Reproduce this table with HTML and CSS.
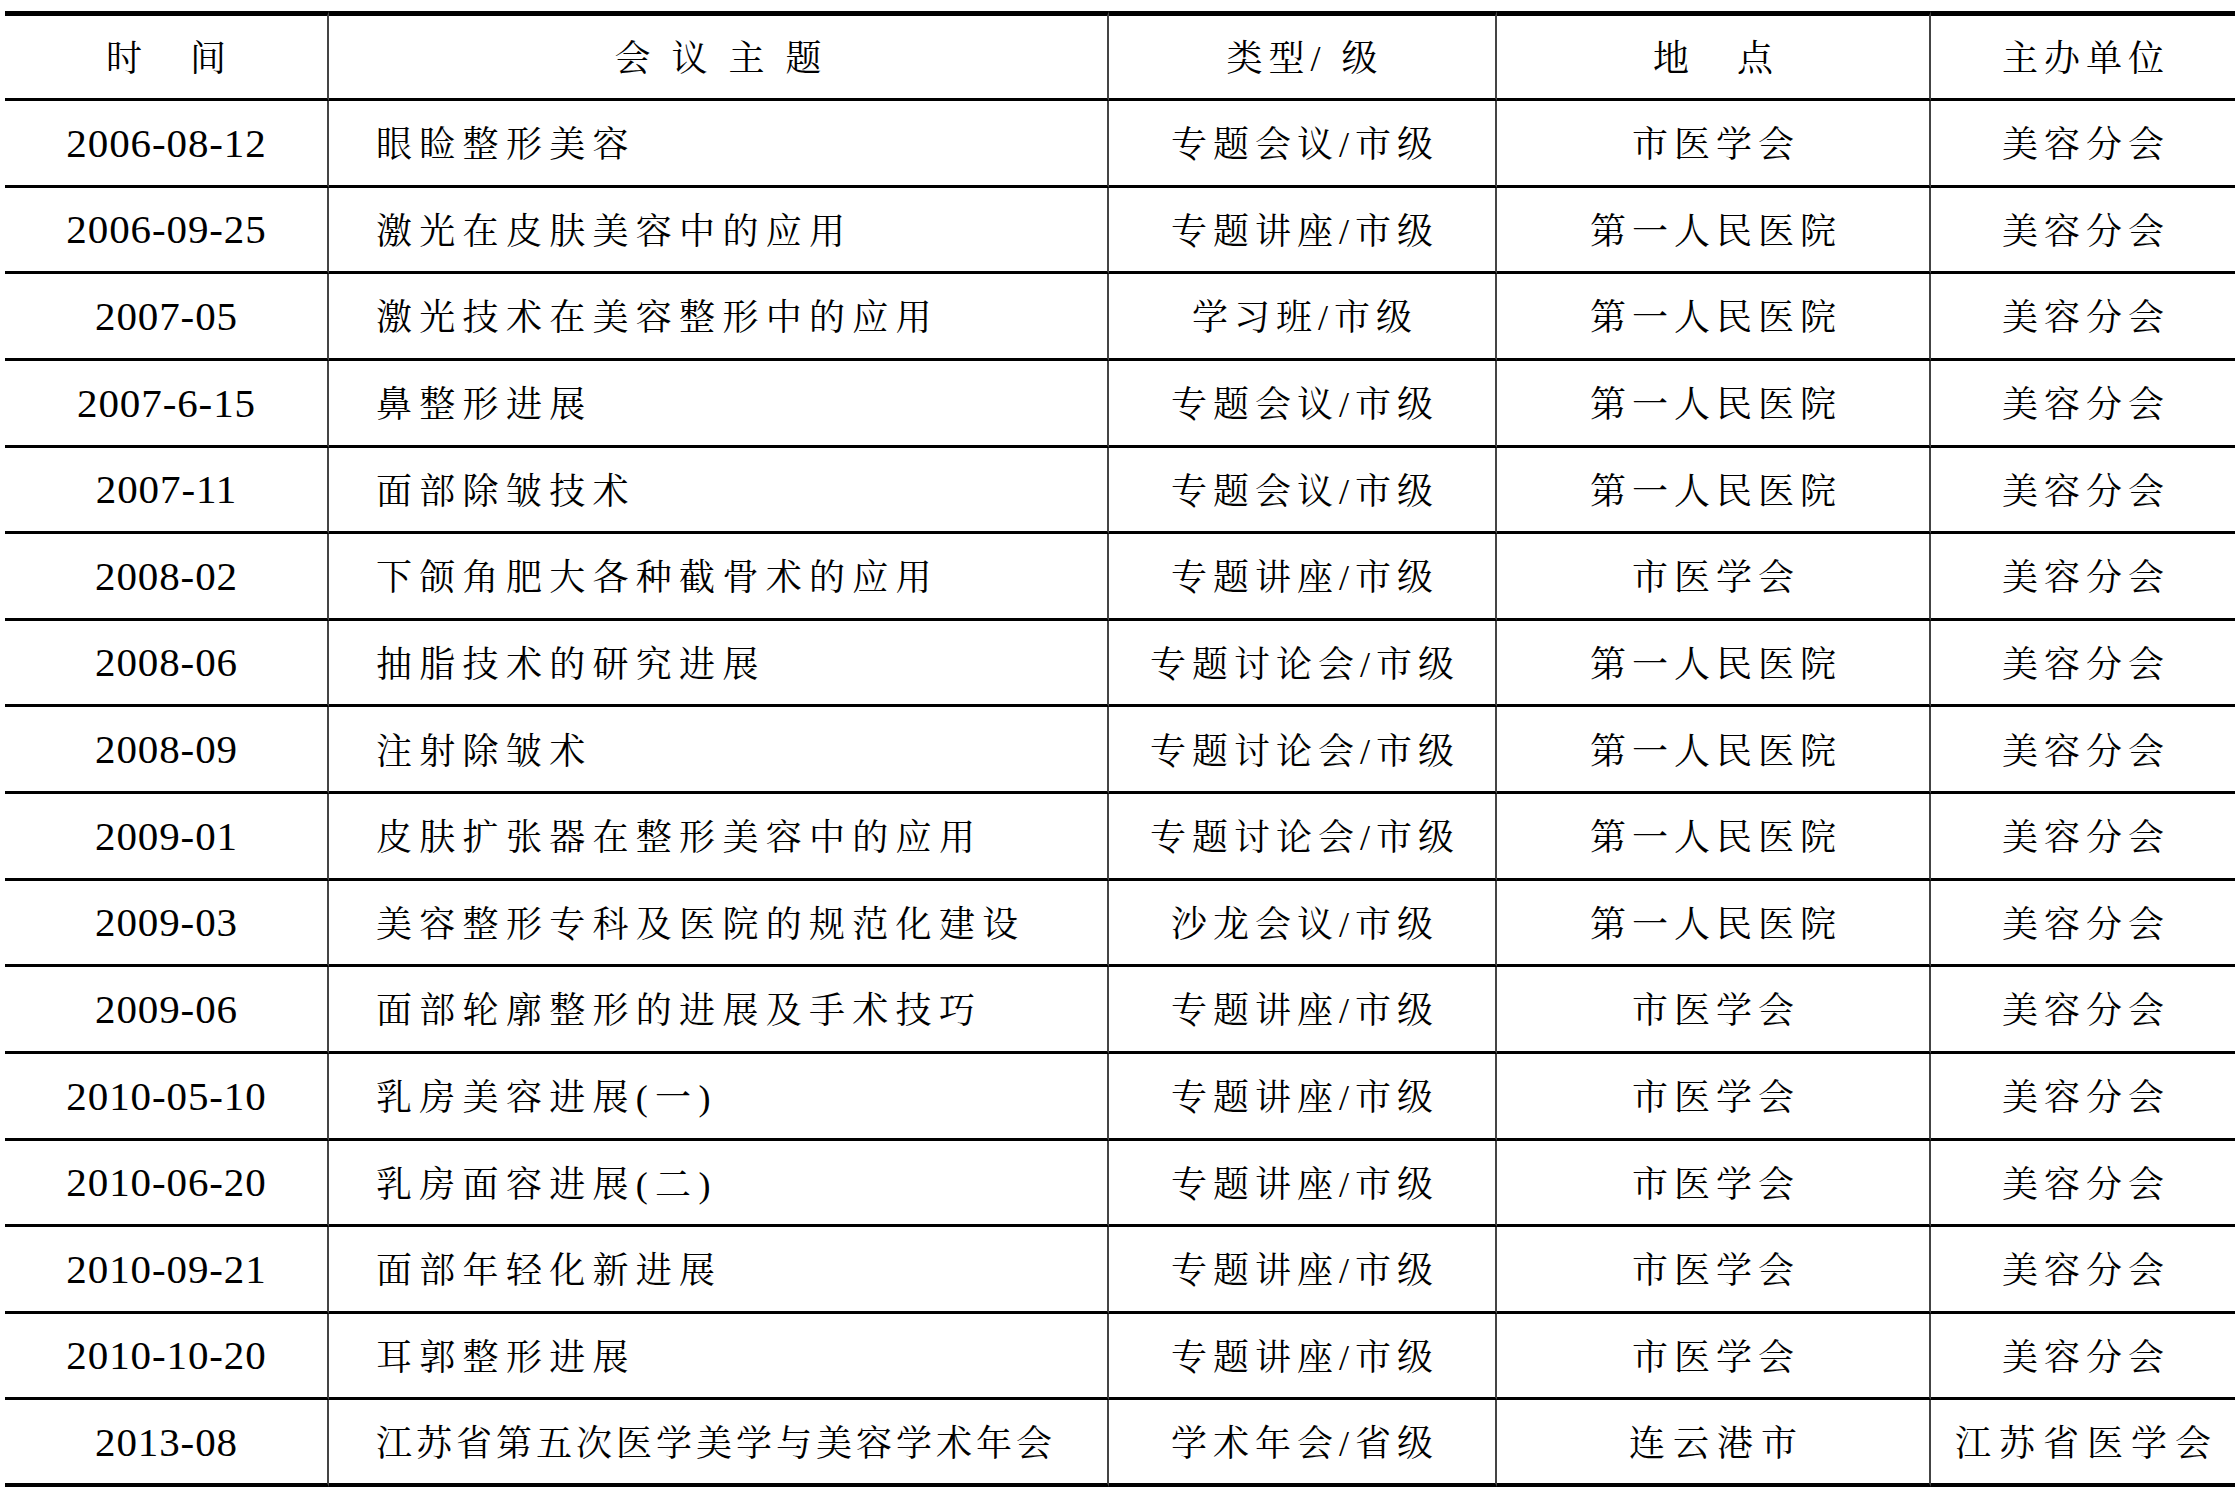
FILE: index.html
```html
<!DOCTYPE html>
<html lang="zh-CN">
<head>
<meta charset="utf-8">
<title>会议列表</title>
<link rel="stylesheet" href="styles.css">
</head>
<body>
<table class="tbl">
  <colgroup>
    <col class="c1"><col class="c2"><col class="c3"><col class="c4"><col class="c5">
  </colgroup>
  <thead>
    <tr>
      <th>时　间</th>
      <th class="h-topic">会 议 主 题</th>
      <th>类型/ 级</th>
      <th>地　点</th>
      <th>主办单位</th>
    </tr>
  </thead>
  <tbody>
    <tr><td class="date">2006-08-12</td><td class="topic">眼睑整形美容</td><td>专题会议/市级</td><td>市医学会</td><td>美容分会</td></tr>
    <tr><td class="date">2006-09-25</td><td class="topic">激光在皮肤美容中的应用</td><td>专题讲座/市级</td><td>第一人民医院</td><td>美容分会</td></tr>
    <tr><td class="date">2007-05</td><td class="topic">激光技术在美容整形中的应用</td><td>学习班/市级</td><td>第一人民医院</td><td>美容分会</td></tr>
    <tr><td class="date">2007-6-15</td><td class="topic">鼻整形进展</td><td>专题会议/市级</td><td>第一人民医院</td><td>美容分会</td></tr>
    <tr><td class="date">2007-11</td><td class="topic">面部除皱技术</td><td>专题会议/市级</td><td>第一人民医院</td><td>美容分会</td></tr>
    <tr><td class="date">2008-02</td><td class="topic">下颌角肥大各种截骨术的应用</td><td>专题讲座/市级</td><td>市医学会</td><td>美容分会</td></tr>
    <tr><td class="date">2008-06</td><td class="topic">抽脂技术的研究进展</td><td>专题讨论会/市级</td><td>第一人民医院</td><td>美容分会</td></tr>
    <tr><td class="date">2008-09</td><td class="topic">注射除皱术</td><td>专题讨论会/市级</td><td>第一人民医院</td><td>美容分会</td></tr>
    <tr><td class="date">2009-01</td><td class="topic">皮肤扩张器在整形美容中的应用</td><td>专题讨论会/市级</td><td>第一人民医院</td><td>美容分会</td></tr>
    <tr><td class="date">2009-03</td><td class="topic">美容整形专科及医院的规范化建设</td><td>沙龙会议/市级</td><td>第一人民医院</td><td>美容分会</td></tr>
    <tr><td class="date">2009-06</td><td class="topic">面部轮廓整形的进展及手术技巧</td><td>专题讲座/市级</td><td>市医学会</td><td>美容分会</td></tr>
    <tr><td class="date">2010-05-10</td><td class="topic">乳房美容进展(一)</td><td>专题讲座/市级</td><td>市医学会</td><td>美容分会</td></tr>
    <tr><td class="date">2010-06-20</td><td class="topic">乳房面容进展(二)</td><td>专题讲座/市级</td><td>市医学会</td><td>美容分会</td></tr>
    <tr><td class="date">2010-09-21</td><td class="topic">面部年轻化新进展</td><td>专题讲座/市级</td><td>市医学会</td><td>美容分会</td></tr>
    <tr><td class="date">2010-10-20</td><td class="topic">耳郭整形进展</td><td>专题讲座/市级</td><td>市医学会</td><td>美容分会</td></tr>
    <tr class="last"><td class="date">2013-08</td><td class="topic tight">江苏省第五次医学美学与美容学术年会</td><td>学术年会/省级</td><td class="wide">连云港市</td><td class="wide">江苏省医学会</td></tr>
  </tbody>
</table>
</body>
</html>
```

FILE: styles.css
```css
html, body {
  margin: 0;
  padding: 0;
  background: #ffffff;
}

body {
  padding: 11px 5px 0 5px;
  font-family: "Liberation Serif", "Noto Serif CJK SC", "Noto Sans CJK SC", serif;
  color: #000000;
}

.tbl {
  width: 2230px;
  table-layout: fixed;
  border-collapse: separate;
  border-spacing: 0;
}

.c1 { width: 324px; }
.c2 { width: 780px; }
.c3 { width: 388px; }
.c4 { width: 434px; }
.c5 { width: 304px; }

.tbl th,
.tbl td {
  box-sizing: border-box;
  padding: 6px 0 0 6px;
  font-size: 36px;
  font-weight: normal;
  letter-spacing: 6px;
  line-height: 1.2;
  text-align: center;
  vertical-align: middle;
  white-space: nowrap;
  border-bottom: 3px solid #000000;
  border-right: 2px solid #444444;
}

.tbl th:last-child,
.tbl td:last-child {
  border-right: none;
}

.tbl th {
  height: 90px;
  border-top: 5px solid #000000;
}

.tbl td {
  height: 86.625px;
}

.tbl .last td {
  border-bottom-width: 4px;
}

.tbl td.date {
  font-size: 41px;
  letter-spacing: 0.9px;
  padding-left: 1px;
  padding-top: 1px;
}

.tbl td.topic {
  text-align: left;
  padding-left: 47px;
  letter-spacing: 7.3px;
}

.tbl td.tight {
  letter-spacing: 4px;
}

.tbl td.wide {
  letter-spacing: 8px;
  padding-left: 8px;
}
```
